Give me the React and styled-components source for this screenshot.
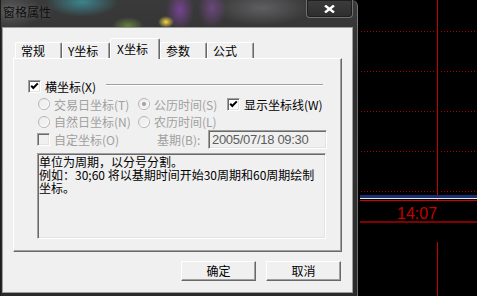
import React from "react";
import styled, { createGlobalStyle } from "styled-components";

const GlobalStyle = createGlobalStyle`
  html, body {
    margin: 0;
    padding: 0;
    background: #000;
  }
  body {
    width: 477px;
    height: 296px;
    overflow: hidden;
    font-family: "Noto Sans CJK SC", "Liberation Sans", sans-serif;
  }
`;

const Page = styled.div`
  display: flex;
  width: 477px;
  height: 296px;
  background: #000;
  overflow: hidden;
`;

// Aero-glass frame with a blurred wallpaper showing through
const Window = styled.div`
  width: 358px;
  height: 296px;
  flex-shrink: 0;
  box-sizing: border-box;
  display: flex;
  flex-direction: column;
  padding: 0 5px 3px 2px;
  border-top-right-radius: 6px;
  background:
    radial-gradient(ellipse 36px 15px at 82px 2px, rgba(60, 140, 150, 0.9), transparent),
    radial-gradient(ellipse 8px 6px at 166px 22px, rgba(245, 215, 70, 1), transparent),
    radial-gradient(ellipse 16px 9px at 128px 26px, rgba(120, 160, 60, 0.7), transparent),
    radial-gradient(ellipse 14px 20px at 180px 10px, rgba(140, 70, 175, 0.75), transparent),
    radial-gradient(ellipse 14px 20px at 212px 8px, rgba(140, 80, 170, 0.6), transparent),
    radial-gradient(ellipse 48px 18px at 262px 8px, rgba(120, 120, 125, 0.6), transparent),
    radial-gradient(ellipse 30px 20px at 10px 10px, rgba(95, 95, 95, 0.8), transparent),
    linear-gradient(180deg, #3a3a3a 0%, #2d2d2d 30%, #303030 60%, #2a2a2a 100%);
  box-shadow: inset -1px 0 0 rgba(190, 190, 190, 0.45), inset 1px 0 0 #1c1c1c;
`;

const TitleBar = styled.div`
  height: 27px;
  flex-shrink: 0;
  display: flex;
  justify-content: space-between;
  align-items: flex-start;
`;

const Title = styled.div`
  padding: 5px 0 0 1px;
  font-size: 12px;
  line-height: 14px;
  color: #0e0e0e;
  text-shadow: 0 0 5px rgba(255, 255, 255, 0.2);
`;

const CloseButton = styled.div`
  width: 47px;
  height: 18px;
  box-sizing: border-box;
  display: flex;
  align-items: center;
  justify-content: center;
  border: 1px solid #707070;
  border-top: none;
  border-radius: 0 0 4px 4px;
  background: linear-gradient(180deg, #3c3c3c, #2e2e2e);
  box-shadow: inset 0 0 0 1px #1f1f1f;
`;

const Client = styled.div`
  flex: 1;
  display: flex;
  flex-direction: column;
  box-sizing: border-box;
  background: #f0f0f0;
  border: 1px solid #9c9c9c;
  padding: 10px 10px 0;
  color: #000;
  font-size: 12px;
`;

const TabStrip = styled.div`
  display: flex;
  align-items: flex-end;
  height: 20px;
  padding-left: 2px;
  position: relative;
  z-index: 1;
`;

const Tab = styled.div`
  width: ${(p) => p.$w}px;
  height: ${(p) => (p.$active ? 21 : 16)}px;
  margin-bottom: ${(p) => (p.$active ? -1 : 0)}px;
  box-sizing: border-box;
  padding: ${(p) => (p.$active ? "2px 0 0 6px" : "0 0 0 5px")};
  background: #f0f0f0;
  border-top: 1px solid #fff;
  border-left: 1px solid #fff;
  border-right: 1px solid #696969;
  box-shadow: inset -1px 0 0 #a0a0a0;
  border-radius: 2px 2px 0 0;
  font-size: 12px;
  line-height: 15px;
  white-space: nowrap;
`;

const TabPanel = styled.div`
  height: 194px;
  box-sizing: border-box;
  display: flex;
  flex-direction: column;
  padding: 18px 14px 0 14px;
  border: 1px solid;
  border-color: #fff #696969 #696969 #fff;
  box-shadow: inset -1px -1px 0 #a0a0a0;
`;

const GroupHeader = styled.div`
  display: flex;
  align-items: center;
  height: 18px;
`;

const GroupLine = styled.div`
  flex: 1;
  height: 0;
  margin: 0 4px 3px 10px;
  border-top: 1px solid #a0a0a0;
  border-bottom: 1px solid #fff;
`;

const GroupBody = styled.div`
  display: flex;
  flex-direction: column;
  padding-left: 9px;
`;

const Row = styled.div`
  display: flex;
  align-items: center;
  height: ${(p) => p.$h}px;
`;

const Item = styled.div`
  display: flex;
  align-items: center;
  gap: 4px;
  flex-shrink: 0;
  width: ${(p) => (p.$w ? `${p.$w}px` : "auto")};
`;

const Label = styled.span`
  font-size: 12px;
  line-height: 13px;
  white-space: nowrap;
  color: ${(p) => (p.$disabled ? "#a0a0a0" : "#000")};
  margin-left: ${(p) => p.$ml || 0}px;
`;

const CheckBox = styled.span`
  width: 13px;
  height: 13px;
  flex-shrink: 0;
  box-sizing: border-box;
  display: flex;
  align-items: center;
  justify-content: center;
  border: 1px solid;
  border-color: #a0a0a0 #fff #fff #a0a0a0;
  box-shadow: inset 1px 1px 0 #696969, inset -1px -1px 0 #e3e3e3;
  background: ${(p) => (p.$disabled ? "#f0f0f0" : "#fff")};
`;

const RadioBox = styled.span`
  width: 12px;
  height: 12px;
  flex-shrink: 0;
  margin-left: 1px;
  display: flex;
`;

const DateInput = styled.div`
  width: 119px;
  height: 19px;
  box-sizing: border-box;
  padding-left: 3px;
  border: 1px solid;
  border-color: #a0a0a0 #fff #fff #a0a0a0;
  box-shadow: inset 1px 1px 0 #696969, inset -1px -1px 0 #e3e3e3;
  background: #f0f0f0;
  color: #5c5c5c;
  font-family: "Liberation Sans", Arial, sans-serif;
  font-size: 13px;
  letter-spacing: -0.3px;
  line-height: 17px;
  white-space: nowrap;
`;

const NoteBox = styled.div`
  margin-top: 4px;
  width: 289px;
  height: 86px;
  box-sizing: border-box;
  padding: 1px 0 0 1px;
  border: 1px solid;
  border-color: #a0a0a0 #fff #fff #a0a0a0;
  box-shadow: inset 1px 1px 0 #696969, inset -1px -1px 0 #e3e3e3;
  background: #f0f0f0;
  font-size: 12px;
  line-height: 13px;
  color: #000;
`;

const NoteLine = styled.div`
  height: 13px;
  white-space: nowrap;
`;

const ButtonRow = styled.div`
  display: flex;
  justify-content: flex-end;
  gap: 10px;
  margin-top: 9px;
  padding-right: 1px;
`;

const Button = styled.div`
  width: 75px;
  height: 20px;
  box-sizing: border-box;
  display: flex;
  align-items: center;
  justify-content: center;
  border: 1px solid;
  border-color: #fff #696969 #696969 #fff;
  box-shadow: inset -1px -1px 0 #a0a0a0;
  background: #f0f0f0;
  font-size: 12px;
  line-height: 14px;
`;

const Chart = styled.svg`
  display: block;
  flex: 1;
  height: 296px;
  background: #000;
`;

const Check = () => (
  <svg width="9" height="9" viewBox="0 0 9 9">
    <polyline
      points="1.2,3.8 3.3,6 7.8,1.4"
      fill="none"
      stroke="#000"
      strokeWidth="2"
    />
  </svg>
);

const Box = ({ checked, disabled }) => (
  <CheckBox $disabled={disabled}>{checked && <Check />}</CheckBox>
);

const Radio = ({ checked }) => (
  <RadioBox>
    <svg width="12" height="12" viewBox="0 0 12 12">
      <circle cx="6" cy="6" r="5.5" fill="#f0f0f0" stroke="#b4b4b4" />
      <path d="M2.5 9.5 A5 5 0 0 0 9.5 2.5" fill="none" stroke="#fff" />
      {checked && <circle cx="6" cy="6" r="2" fill="#a0a0a0" />}
    </svg>
  </RadioBox>
);

const tabs = [
  { label: "常规", w: 47 },
  { label: "Y坐标", w: 48 },
  { label: "X坐标", w: 50, active: true },
  { label: "参数", w: 47 },
  { label: "公式", w: 47 },
];

const dottedRows = [31.5, 71.5, 111.5, 151.5, 191.5];

const App = () => {
  return (
    <Page>
      <GlobalStyle />
      <Window>
        <TitleBar>
          <Title>窗格属性</Title>
          <CloseButton>
            <svg width="11" height="8" viewBox="0 0 11 8">
              <path
                d="M1 0.5 L10 7.5 M10 0.5 L1 7.5"
                stroke="#fff"
                strokeWidth="2.4"
              />
            </svg>
          </CloseButton>
        </TitleBar>

        <Client>
          <TabStrip>
            {tabs.map((t) => (
              <Tab key={t.label} $w={t.w} $active={t.active}>
                {t.label}
              </Tab>
            ))}
          </TabStrip>

          <TabPanel>
            <GroupHeader>
              <Box checked />
              <Label $ml={4}>横坐标(X)</Label>
              <GroupLine />
            </GroupHeader>

            <GroupBody>
              <Row $h={18}>
                <Item $w={100}>
                  <Radio />
                  <Label $disabled>交易日坐标(T)</Label>
                </Item>
                <Item $w={90}>
                  <Radio checked />
                  <Label $disabled>公历时间(S)</Label>
                </Item>
                <Item>
                  <Box checked />
                  <Label>显示坐标线(W)</Label>
                </Item>
              </Row>

              <Row $h={17}>
                <Item $w={100}>
                  <Radio />
                  <Label $disabled>自然日坐标(N)</Label>
                </Item>
                <Item $w={90}>
                  <Radio />
                  <Label $disabled>农历时间(L)</Label>
                </Item>
              </Row>

              <Row $h={19}>
                <Item $w={120}>
                  <Box disabled />
                  <Label $disabled>自定坐标(O)</Label>
                </Item>
                <Item $w={51}>
                  <Label $disabled>基期(B):</Label>
                </Item>
                <DateInput>2005/07/18 09:30</DateInput>
              </Row>

              <NoteBox>
                <NoteLine>单位为周期，以分号分割。</NoteLine>
                <NoteLine>例如：30;60 将以基期时间开始30周期和60周期绘制</NoteLine>
                <NoteLine>坐标。</NoteLine>
              </NoteBox>
            </GroupBody>
          </TabPanel>

          <ButtonRow>
            <Button>确定</Button>
            <Button>取消</Button>
          </ButtonRow>
        </Client>
      </Window>

      <Chart viewBox="0 0 119 296" width="119" height="296">
        {dottedRows.map((y) => (
          <g key={y}>
            <line x1="3" y1={y} x2="76" y2={y} stroke="#b00000" strokeDasharray="1 2" />
            <line x1="83" y1={y} x2="119" y2={y} stroke="#b00000" strokeDasharray="1 2" />
          </g>
        ))}
        <line x1="79.5" y1="0" x2="79.5" y2="200" stroke="#c80000" />
        <line x1="79.5" y1="242" x2="79.5" y2="296" stroke="#c80000" />
        <rect x="2" y="195" width="117" height="3" fill="#1c2f6e" />
        <line x1="2" y1="198.5" x2="119" y2="198.5" stroke="#e8e8f0" />
        <line x1="2" y1="200.5" x2="119" y2="200.5" stroke="#d40000" />
        <line x1="2" y1="222" x2="119" y2="222" stroke="#ff0000" />
        <text
          x="39"
          y="219"
          fill="#c40000"
          fontFamily="Liberation Sans, Arial, sans-serif"
          fontSize="16"
        >
          14:07
        </text>
      </Chart>
    </Page>
  );
};

export default App;
